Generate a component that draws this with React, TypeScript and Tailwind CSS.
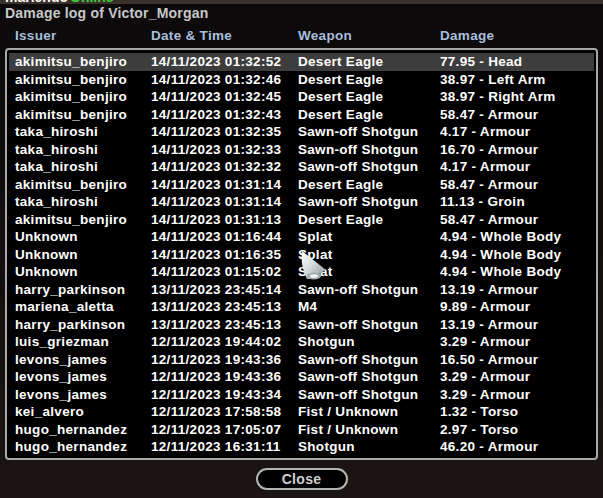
import type { ReactNode } from 'react';

type Hit = [string, string, string, string];

const hits: Hit[] = [
  ['akimitsu_benjiro', '14/11/2023 01:32:52', 'Desert Eagle', '77.95 - Head'],
  ['akimitsu_benjiro', '14/11/2023 01:32:46', 'Desert Eagle', '38.97 - Left Arm'],
  ['akimitsu_benjiro', '14/11/2023 01:32:45', 'Desert Eagle', '38.97 - Right Arm'],
  ['akimitsu_benjiro', '14/11/2023 01:32:43', 'Desert Eagle', '58.47 - Armour'],
  ['taka_hiroshi', '14/11/2023 01:32:35', 'Sawn-off Shotgun', '4.17 - Armour'],
  ['taka_hiroshi', '14/11/2023 01:32:33', 'Sawn-off Shotgun', '16.70 - Armour'],
  ['taka_hiroshi', '14/11/2023 01:32:32', 'Sawn-off Shotgun', '4.17 - Armour'],
  ['akimitsu_benjiro', '14/11/2023 01:31:14', 'Desert Eagle', '58.47 - Armour'],
  ['taka_hiroshi', '14/11/2023 01:31:14', 'Sawn-off Shotgun', '11.13 - Groin'],
  ['akimitsu_benjiro', '14/11/2023 01:31:13', 'Desert Eagle', '58.47 - Armour'],
  ['Unknown', '14/11/2023 01:16:44', 'Splat', '4.94 - Whole Body'],
  ['Unknown', '14/11/2023 01:16:35', 'Splat', '4.94 - Whole Body'],
  ['Unknown', '14/11/2023 01:15:02', 'Splat', '4.94 - Whole Body'],
  ['harry_parkinson', '13/11/2023 23:45:14', 'Sawn-off Shotgun', '13.19 - Armour'],
  ['mariena_aletta', '13/11/2023 23:45:13', 'M4', '9.89 - Armour'],
  ['harry_parkinson', '13/11/2023 23:45:13', 'Sawn-off Shotgun', '13.19 - Armour'],
  ['luis_griezman', '12/11/2023 19:44:02', 'Shotgun', '3.29 - Armour'],
  ['levons_james', '12/11/2023 19:43:36', 'Sawn-off Shotgun', '16.50 - Armour'],
  ['levons_james', '12/11/2023 19:43:36', 'Sawn-off Shotgun', '3.29 - Armour'],
  ['levons_james', '12/11/2023 19:43:34', 'Sawn-off Shotgun', '3.29 - Armour'],
  ['kei_alvero', '12/11/2023 17:58:58', 'Fist / Unknown', '1.32 - Torso'],
  ['hugo_hernandez', '12/11/2023 17:05:07', 'Fist / Unknown', '2.97 - Torso'],
  ['hugo_hernandez', '12/11/2023 16:31:11', 'Shotgun', '46.20 - Armour'],
];

const cols = 'grid grid-cols-[136px_147px_142px_1fr]';

function Row({ hit, selected }: { hit: Hit; selected?: boolean }) {
  return (
    <div
      className={`${cols} h-[17.5px] items-center pl-[6px] ${selected ? 'bg-[#3d3d3d]' : ''}`}
    >
      {hit.map((cell, i) => (
        <span key={i} className="whitespace-nowrap">
          {cell}
        </span>
      ))}
    </div>
  );
}

// SA-MP style mouse pointer, floats over the list
function Pointer() {
  return (
    <svg className="absolute left-[299px] top-[249px]" width="30" height="36" viewBox="0 0 30 36">
      <defs>
        <linearGradient id="cone" x1="0" y1="0" x2="1" y2="1">
          <stop offset="0" stopColor="#ffffff" />
          <stop offset="0.45" stopColor="#d6dcdc" />
          <stop offset="1" stopColor="#8a9292" />
        </linearGradient>
      </defs>
      <path d="M3 2 L27 21 Q18 27 8 30 Q1 16 3 2 Z" fill="url(#cone)" />
      <ellipse cx="15" cy="27" rx="7" ry="3.4" fill="#a3abab" />
      <ellipse cx="15" cy="27" rx="4" ry="1.8" fill="#eef3f3" />
    </svg>
  );
}

function Frame({ children }: { children: ReactNode }) {
  return (
    <div className="mx-[5px] mt-[4px] rounded-[4px] border-2 border-[#a8a8a8] bg-black px-[2px] pt-[3px] pb-[2px]">
      {children}
    </div>
  );
}

export default function App() {
  return (
    <div
      className="relative h-[498px] w-[603px] overflow-hidden bg-[#3b302a] font-bold"
      style={{ fontFamily: '"Liberation Sans", Arial, sans-serif' }}
    >
      <div className="h-[4px] overflow-hidden pl-[5px] text-[14px] leading-none">
        <div className="-mt-[10px] flex">
          <span className="text-white">mariendo</span>
          <span className="ml-[2px] text-[#3cd23c]">Online</span>
        </div>
      </div>

      <div className="h-[494px] bg-gradient-to-b from-[#0c0a0a] via-[#110e0d] to-[#1b1613]">
        <div className="pl-[5px] pt-[1px] text-[14px] leading-[17px] tracking-[0.2px] text-[#c8c8c8]">
          Damage log of Victor_Morgan
        </div>

        <div
          className={`${cols} mt-[6px] pl-[15px] text-[13.5px] leading-[16px] tracking-[0.3px] text-[#a8bedb]`}
        >
          <span>Issuer</span>
          <span>Date &amp; Time</span>
          <span>Weapon</span>
          <span>Damage</span>
        </div>

        <Frame>
          <div className="text-[13.5px] leading-none tracking-[0.3px] text-white">
            {hits.map((hit, i) => (
              <Row key={i} hit={hit} selected={i === 0} />
            ))}
          </div>
        </Frame>

        <div className="mt-[8px] flex justify-center">
          <button className="h-[22px] w-[92px] rounded-full border-2 border-[#b4b4b4] bg-black text-[14px] leading-none tracking-[0.3px] text-[#d0d0d0]">
            Close
          </button>
        </div>
      </div>

      <Pointer />
    </div>
  );
}
